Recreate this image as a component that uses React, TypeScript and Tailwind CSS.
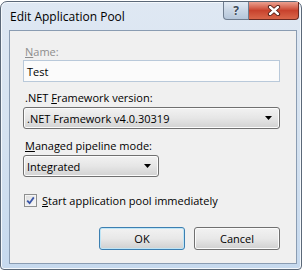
import React from "react";

const ComboArrow = () => (
  <svg width="7" height="4" viewBox="0 0 7 4" className="shrink-0">
    <path d="M0 0 H7 L3.5 4 Z" fill="#000" />
  </svg>
);

const Combo = ({ value, width }: { value: string; width: string }) => (
  <div
    className={`${width} h-[22px] flex items-center justify-between pl-[3px] pr-[7px] rounded-[3px] border border-[#707070] bg-gradient-to-b from-[#f2f2f2] via-[#e6e6e6] to-[#d2d2d2] shadow-[inset_0_0_0_1px_#fcfcfc]`}
  >
    <span>{value}</span>
    <ComboArrow />
  </div>
);

const Button = ({ label, isDefault }: { label: string; isDefault?: boolean }) => (
  <div
    className={`w-[86px] h-[23px] flex items-center justify-center rounded-[3px] border bg-gradient-to-b from-[#f2f2f2] via-[#e8e8e8] to-[#d0d0d0] ${
      isDefault
        ? "border-[#3c7fb1] shadow-[inset_0_0_0_1px_#bfe5f6]"
        : "border-[#707070] shadow-[inset_0_0_0_1px_#fbfbfb]"
    }`}
  >
    {label}
  </div>
);

export default function App() {
  return (
    <div className="w-[304px] h-[274px] bg-white pt-[1px] font-['Open_Sans',sans-serif] text-[11px] leading-[15px] text-black">
      <div className="relative w-[302px] h-[269px] flex flex-col rounded-t-[7px] rounded-b-[4px] border border-[#5b6878] bg-gradient-to-b from-[#dfe8f3] via-[#d5e2f0] to-[#c6d9ee] shadow-[inset_0_0_0_1px_#f4f8fc]">
        {/* title bar */}
        <div className="h-[28px] flex items-center pl-[9px] shrink-0">
          <span className="text-[12px]">Edit Application Pool</span>
        </div>

        {/* caption buttons */}
        <div className="absolute top-0 right-[2px] flex">
          <div className="w-[26px] h-[18px] flex items-center justify-center rounded-bl-[4px] border border-t-0 border-[#6f7d8f] bg-gradient-to-b from-[#e3ebf4] via-[#c9d6e5] to-[#b5c6da]">
            <span className="text-[12px] font-bold leading-none text-[#3d4a5a] [text-shadow:0_0_2px_#ffffff]">?</span>
          </div>
          <div className="w-[50px] h-[18px] flex items-center justify-center rounded-br-[4px] border border-l-0 border-t-0 border-[#6b2a22] bg-gradient-to-b from-[#eba090] via-[#c8422d] to-[#d9664a]">
            <svg width="14" height="11" viewBox="0 0 14 11">
              <path d="M3 2 L11 9 M11 2 L3 9" stroke="#4d1a12" strokeWidth="4.2" strokeLinecap="round" />
              <path d="M3 2 L11 9 M11 2 L3 9" stroke="#ffffff" strokeWidth="2.4" strokeLinecap="round" />
            </svg>
          </div>
        </div>

        {/* client area */}
        <div className="ml-[8px] mr-[4px] flex-1 flex flex-col border border-[#8a9cb2] bg-[#f0f0f0] pl-[13px] pr-[16px] pt-[13px]">
          <div className="text-[#8d8d8d] pl-[2px]">
            <span className="underline">N</span>ame:
          </div>
          <div className="mt-[1px] h-[22px] flex items-center pl-[3px] border border-[#b9c9da] bg-[#fbfbfb]">
            Test
          </div>

          <div className="mt-[8px] pl-[2px]">
            .NET <span className="underline">F</span>ramework version:
          </div>
          <div className="mt-[2px]">
            <Combo value=".NET Framework v4.0.30319" width="w-full" />
          </div>

          <div className="mt-[9px] pl-[2px]">
            <span className="underline">M</span>anaged pipeline mode:
          </div>
          <div className="mt-[2px]">
            <Combo value="Integrated" width="w-[136px]" />
          </div>

          <div className="mt-[16px] flex items-center pl-[1px]">
            <div className="w-[13px] h-[13px] flex items-center justify-center border border-[#8e8f8f] bg-gradient-to-br from-[#dcdcdc] to-[#fafafa] shadow-[inset_0_0_0_1px_#f4f4f4]">
              <svg width="9" height="9" viewBox="0 0 9 9">
                <path d="M1.2 4.6 L3.6 7.2 L7.8 1.4" fill="none" stroke="#3a56a8" strokeWidth="1.8" />
              </svg>
            </div>
            <span className="ml-[5px]">
              <span className="underline">S</span>tart application pool immediately
            </span>
          </div>

          <div className="mt-[19px] flex justify-end gap-[9px]">
            <Button label="OK" isDefault />
            <Button label="Cancel" />
          </div>
        </div>
        <div className="h-[5px] shrink-0" />
      </div>
    </div>
  );
}
